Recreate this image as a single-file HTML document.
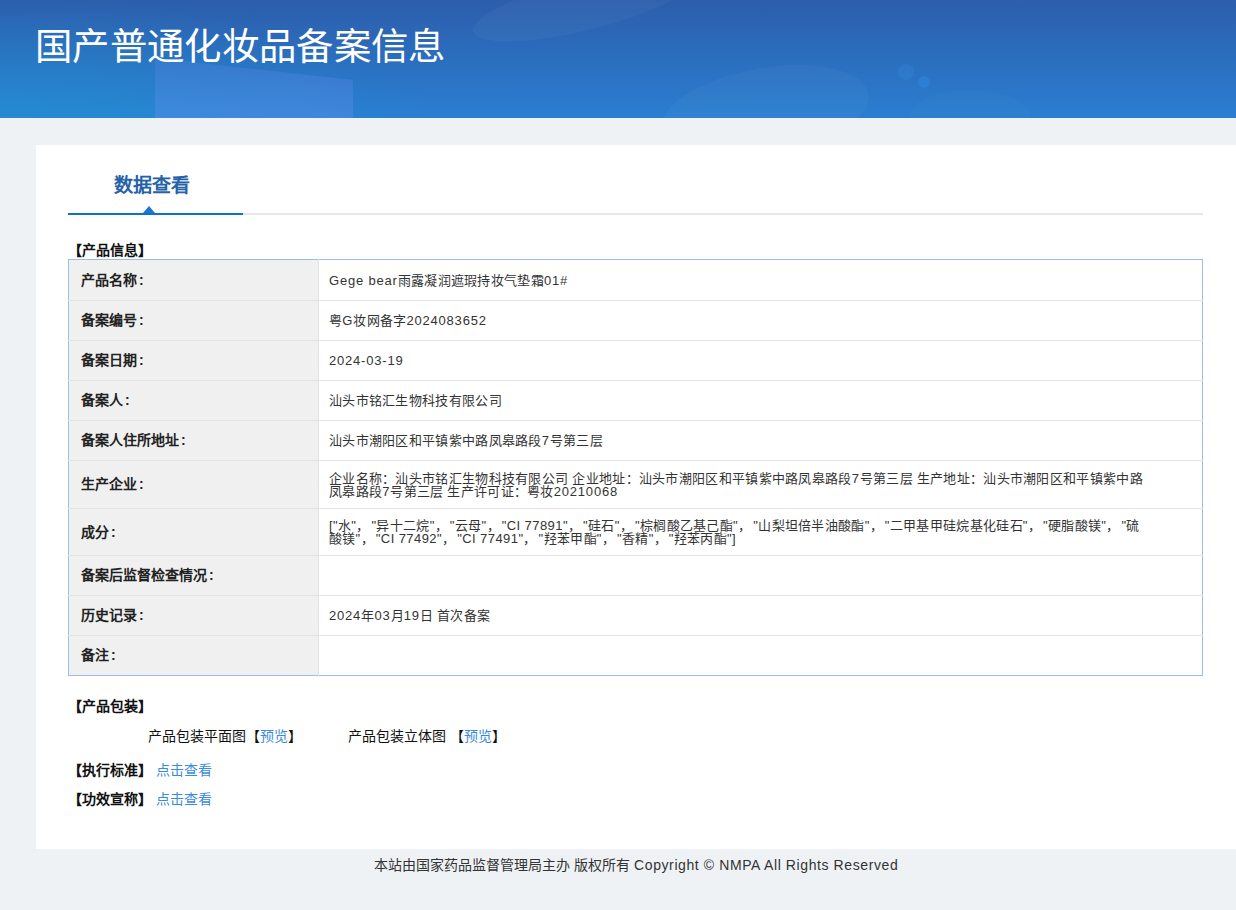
<!DOCTYPE html>
<html lang="zh-CN"><head><meta charset="utf-8">
<style>
*{margin:0;padding:0;box-sizing:border-box}
html,body{width:1236px;height:910px;overflow:hidden;background:#eff2f5;font-family:"Liberation Sans",sans-serif;color:#333}
.hdr{position:absolute;left:0;top:0;width:1236px;height:118px;background:linear-gradient(180deg,#2d64b2 0%,#2b7bd0 100%);overflow:hidden}
.hdr h1{position:absolute;left:35px;top:23px;font-size:37.4px;letter-spacing:0.35px;font-weight:normal;color:#fff;line-height:48px;white-space:nowrap}
.panel{position:absolute;left:36px;top:145px;width:1200px;height:704px;background:#fff}
.tab{position:absolute;left:78px;top:29px;font-size:19px;font-weight:bold;color:#2562a8;line-height:24px}
.line-g{position:absolute;left:32px;top:68px;width:1135px;height:2px;background:#e6e6e6}
.line-b{position:absolute;left:32px;top:68px;width:175px;height:2px;background:#0e72cc}
.tri{position:absolute;left:107px;top:61px;width:0;height:0;border-left:6px solid transparent;border-right:6px solid transparent;border-bottom:7px solid #1a78d0}
.sec{position:absolute;font-size:14px;font-weight:bold;color:#111;line-height:20px;white-space:nowrap}
table{position:absolute;left:32px;top:114px;width:1135px;border-collapse:collapse;border:1px solid #9dbde6}
td{border-top:1px solid #e3e3e3;font-size:13px;letter-spacing:0.3px;line-height:13px;vertical-align:middle}
td.l{letter-spacing:0;width:250px;background:#f0f0f0;font-weight:bold;font-size:14px;color:#222;padding-left:12px;border-right:1px solid #e3e3e3}
td.v{padding-left:10px;color:#333}
.txt{position:absolute;font-size:14px;color:#111;white-space:nowrap;line-height:20px}
.c{margin-left:2px}
a{color:#3a8be0;text-decoration:none}
td .e{letter-spacing:0.8px}
td .e2{letter-spacing:0.43px}
td .cm{letter-spacing:2.1px}
.fe{letter-spacing:0.6px}
.foot{position:absolute;left:36px;top:855px;width:1200px;text-align:center;font-size:14px;color:#333;line-height:20px}
</style></head><body>
<div class="hdr"><svg width="1236" height="118" style="position:absolute;left:0;top:0">
<defs>
<linearGradient id="g1" x1="0" y1="0" x2="0" y2="1"><stop offset="0" stop-color="#2c5eac"/><stop offset="1" stop-color="#2a7ed1"/></linearGradient>
<radialGradient id="g2" gradientUnits="userSpaceOnUse" cx="0" cy="130" r="440" gradientTransform="translate(0 130) scale(1 0.3) translate(0 -130)"><stop offset="0" stop-color="#1f9ad6" stop-opacity="0.5"/><stop offset="0.6" stop-color="#1f9ad6" stop-opacity="0.2"/><stop offset="1" stop-color="#1f9ad6" stop-opacity="0"/></radialGradient>
<linearGradient id="g3" x1="0" y1="0" x2="0" y2="1"><stop offset="0" stop-color="#5b86e6" stop-opacity="0.25"/><stop offset="1" stop-color="#5a8fe8" stop-opacity="0.45"/></linearGradient>
</defs>
<rect width="1236" height="118" fill="url(#g1)"/>
<rect width="1236" height="118" fill="url(#g2)"/>
<polygon points="155,58 353,80 353,118 155,118" fill="url(#g3)"/>
<ellipse cx="585" cy="4" rx="115" ry="26" transform="rotate(-14 585 4)" fill="#ffffff" fill-opacity="0.035"/>
<ellipse cx="765" cy="112" rx="105" ry="44" transform="rotate(-10 765 112)" fill="#ffffff" fill-opacity="0.03"/><ellipse cx="970" cy="115" rx="60" ry="25" fill="#ffffff" fill-opacity="0.015"/>

<circle cx="906" cy="72" r="8" fill="#3a8fe0" fill-opacity="0.25"/>
<circle cx="924" cy="82" r="6" fill="#2f8fe6" fill-opacity="0.4"/>
</svg><h1>国产普通化妆品备案信息</h1></div>
<div class="panel">
<div class="tab">数据查看</div>
<div class="line-g"></div><div class="line-b"></div><div class="tri"></div>
<div class="sec" style="left:32px;top:95px">【产品信息】</div>
<table>
<tr style="height:41px"><td class="l" style="border-top:none">产品名称<span class="c">:</span></td><td class="v" style="border-top:none"><span class="e">Gege bear</span>雨露凝润遮瑕持妆气垫霜<span class="e">01#</span></td></tr>
<tr style="height:40px"><td class="l">备案编号<span class="c">:</span></td><td class="v">粤<span class="e">G</span>妆网备字<span class="e">2024083652</span></td></tr>
<tr style="height:40px"><td class="l">备案日期<span class="c">:</span></td><td class="v"><span class="e">2024-03-19</span></td></tr>
<tr style="height:40px"><td class="l">备案人<span class="c">:</span></td><td class="v">汕头市铭汇生物科技有限公司</td></tr>
<tr style="height:40px"><td class="l">备案人住所地址<span class="c">:</span></td><td class="v">汕头市潮阳区和平镇紫中路凤皋路段<span class="e">7</span>号第三层</td></tr>
<tr style="height:48px"><td class="l">生产企业<span class="c">:</span></td><td class="v">企业名称：汕头市铭汇生物科技有限公司 企业地址：汕头市潮阳区和平镇紫中路凤皋路段<span class="e">7</span>号第三层 生产地址：汕头市潮阳区和平镇紫中路<br>凤皋路段<span class="e">7</span>号第三层 生产许可证：粤妆<span class="e">20210068</span></td></tr>
<tr style="height:47px"><td class="l">成分<span class="c">:</span></td><td class="v">[<span class="e2">"</span>水<span class="e2">"</span><span class="cm">，</span><span class="e2">"</span>异十二烷<span class="e2">"</span><span class="cm">，</span><span class="e2">"</span>云母<span class="e2">"</span><span class="cm">，</span><span class="e2">"CI 77891"</span><span class="cm">，</span><span class="e2">"</span>硅石<span class="e2">"</span><span class="cm">，</span><span class="e2">"</span>棕榈酸乙基己酯<span class="e2">"</span><span class="cm">，</span><span class="e2">"</span>山梨坦倍半油酸酯<span class="e2">"</span><span class="cm">，</span><span class="e2">"</span>二甲基甲硅烷基化硅石<span class="e2">"</span><span class="cm">，</span><span class="e2">"</span>硬脂酸镁<span class="e2">"</span><span class="cm">，</span><span class="e2">"</span>硫<br>酸镁<span class="e2">"</span><span class="cm">，</span><span class="e2">"CI 77492"</span><span class="cm">，</span><span class="e2">"CI 77491"</span><span class="cm">，</span><span class="e2">"</span>羟苯甲酯<span class="e2">"</span><span class="cm">，</span><span class="e2">"</span>香精<span class="e2">"</span><span class="cm">，</span><span class="e2">"</span>羟苯丙酯<span class="e2">"</span>]</td></tr>
<tr style="height:40px"><td class="l">备案后监督检查情况<span class="c">:</span></td><td class="v"></td></tr>
<tr style="height:40px"><td class="l">历史记录<span class="c">:</span></td><td class="v"><span class="e">2024</span>年<span class="e">03</span>月<span class="e">19</span>日 首次备案</td></tr>
<tr style="height:40px"><td class="l">备注<span class="c">:</span></td><td class="v"></td></tr>
</table>
<div class="sec" style="left:32px;top:551px">【产品包装】</div>
<div class="txt" style="left:112px;top:581px">产品包装平面图【<a>预览</a>】</div>
<div class="txt" style="left:312px;top:581px">产品包装立体图 【<a>预览</a>】</div>
<div class="sec" style="left:32px;top:615px">【执行标准】 <a style="font-weight:normal">点击查看</a></div>
<div class="sec" style="left:32px;top:644px">【功效宣称】 <a style="font-weight:normal">点击查看</a></div>
</div>
<div class="foot">本站由国家药品监督管理局主办 版权所有<span class="fe"> Copyright © NMPA All Rights Reserved</span></div>
</body></html>
